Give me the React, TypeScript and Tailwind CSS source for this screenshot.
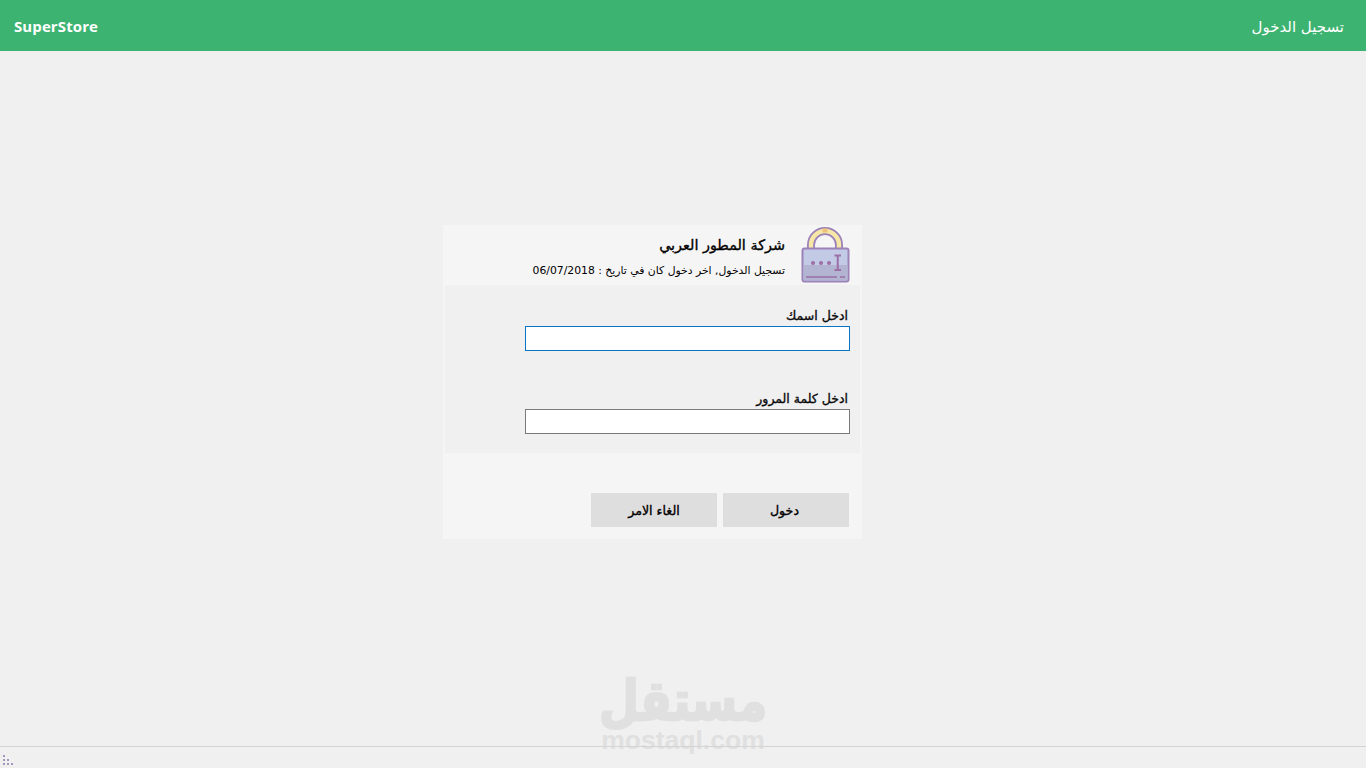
const arabic = "font-['Tahoma','DejaVu_Sans','Noto_Sans',sans-serif]"
const fauxBold = "[-webkit-text-stroke:0.35px_currentColor]"

function LockIcon() {
  return (
    <svg width="51" height="58" viewBox="0 0 51 58" className="shrink-0">
      <path d="M11 25 V20 A14 14 0 0 1 39 20 V25" fill="none" stroke="#9c82b8" strokeWidth="8" />
      <path d="M11 25 V20 A14 14 0 0 1 39 20 V25" fill="none" stroke="#f6e7a6" strokeWidth="4.4" />
      <rect x="22.5" y="3.5" width="5" height="4" fill="#efc27a" />
      <rect x="2.5" y="23.5" width="46" height="33" rx="2" fill="#c2cae6" stroke="#9c82b8" strokeWidth="2" />
      <path d="M3.5 40 H47.5 V54.5 Q47.5 55.5 46.5 55.5 H4.5 Q3.5 55.5 3.5 54.5 Z" fill="#b3b3d2" />
      <circle cx="13" cy="38" r="2" fill="#9c6fa6" />
      <circle cx="21" cy="38" r="2" fill="#9c6fa6" />
      <circle cx="29" cy="38" r="2" fill="#9c6fa6" />
      <path d="M34.5 30.5 H41 M37.75 30.5 V45 M34.5 45 H41" fill="none" stroke="#9c6fa6" strokeWidth="2" />
      <path d="M6 52 H37 M40 52 H45" fill="none" stroke="#9c6fa6" strokeWidth="1.4" />
    </svg>
  )
}

function Grip() {
  const dots = [[0, 0], [0, 4], [4, 4], [0, 8], [4, 8], [8, 8]]
  return (
    <svg width="10" height="10" viewBox="0 0 10 10" className="ml-[3px] mt-[8px]">
      {dots.map(([x, y]) => (
        <rect key={`${x}-${y}`} x={x} y={y} width="2" height="2" fill="#a796bd" />
      ))}
    </svg>
  )
}

function Field({ label, borderClass }: { label: string; borderClass: string }) {
  return (
    <div>
      <label className={`block pr-[2px] text-right text-[12.5px] leading-[17px] text-[#0a0a0a] ${fauxBold} ${arabic}`}>{label}</label>
      <input type="text" className={`mt-[2px] block h-[25px] w-[325px] border bg-white outline-none ${borderClass}`} />
    </div>
  )
}

export default function App() {
  return (
    <div className="relative flex h-[768px] w-[1366px] flex-col overflow-hidden bg-[#f0f0f0]">
      <header className="flex h-[51px] shrink-0 items-center justify-between bg-[#3cb371] pl-[14px] pr-[22px] pt-[2px] text-white">
        <span className="font-['Open_Sans','Noto_Sans',sans-serif] text-[15px] font-bold tracking-[0.1px]">SuperStore</span>
        <span dir="rtl" className={`pt-[2px] text-[15px] ${arabic}`}>تسجيل الدخول</span>
      </header>

      <main className="flex-1 pl-[443px] pt-[174px]">
        <div dir="rtl" className="flex h-[314px] w-[419px] flex-col bg-[#f5f5f5]">
          <div className="flex h-[60px] shrink-0 items-start gap-[15px] pr-[11px]">
            <LockIcon />
            <div className={`text-right ${arabic}`}>
              <h1 className={`mt-[9px] text-[14.4px] leading-[22px] text-[#000] ${fauxBold}`}>شركة المطور العربي</h1>
              <p className="mt-[7px] text-[10.8px] leading-[16px] text-[#000]">تسجيل الدخول, اخر دخول كان في تاريخ : 06/07/2018</p>
            </div>
          </div>

          <div className="mx-[2px] flex h-[168px] shrink-0 flex-col gap-[39px] bg-[#f0f0f0] pr-[10px] pt-[22px]">
            <Field label="ادخل اسمك" borderClass="border-[#0a74c4]" />
            <Field label="ادخل كلمة المرور" borderClass="border-[#7a7a7a]" />
          </div>

          <div className={`flex gap-[6px] pr-[13px] pt-[40px] text-[12.6px] text-[#000] ${fauxBold} ${arabic}`}>
            <button className="h-[34px] w-[126px] bg-[#dedede] pr-[3px] pt-[2px]">دخول</button>
            <button className="h-[34px] w-[126px] bg-[#dedede] pt-[2px]">الغاء الامر</button>
          </div>
        </div>
      </main>

      <div className="pointer-events-none absolute left-[583px] top-[662px] flex w-[200px] flex-col items-center text-[#e0e0e0]">
        <span dir="rtl" className="origin-bottom translate-y-[12px] scale-y-[1.2] font-['DejaVu_Sans',sans-serif] text-[46px] font-bold leading-[66px] [-webkit-text-stroke:2px_#e0e0e0]">مستقل</span>
        <span className="font-['Liberation_Sans',sans-serif] text-[26.5px] font-bold leading-[24px]">mostaql.com</span>
      </div>

      <footer className="relative h-[22px] shrink-0 border-t border-[#d4d4d4]">
        <Grip />
      </footer>
    </div>
  )
}
